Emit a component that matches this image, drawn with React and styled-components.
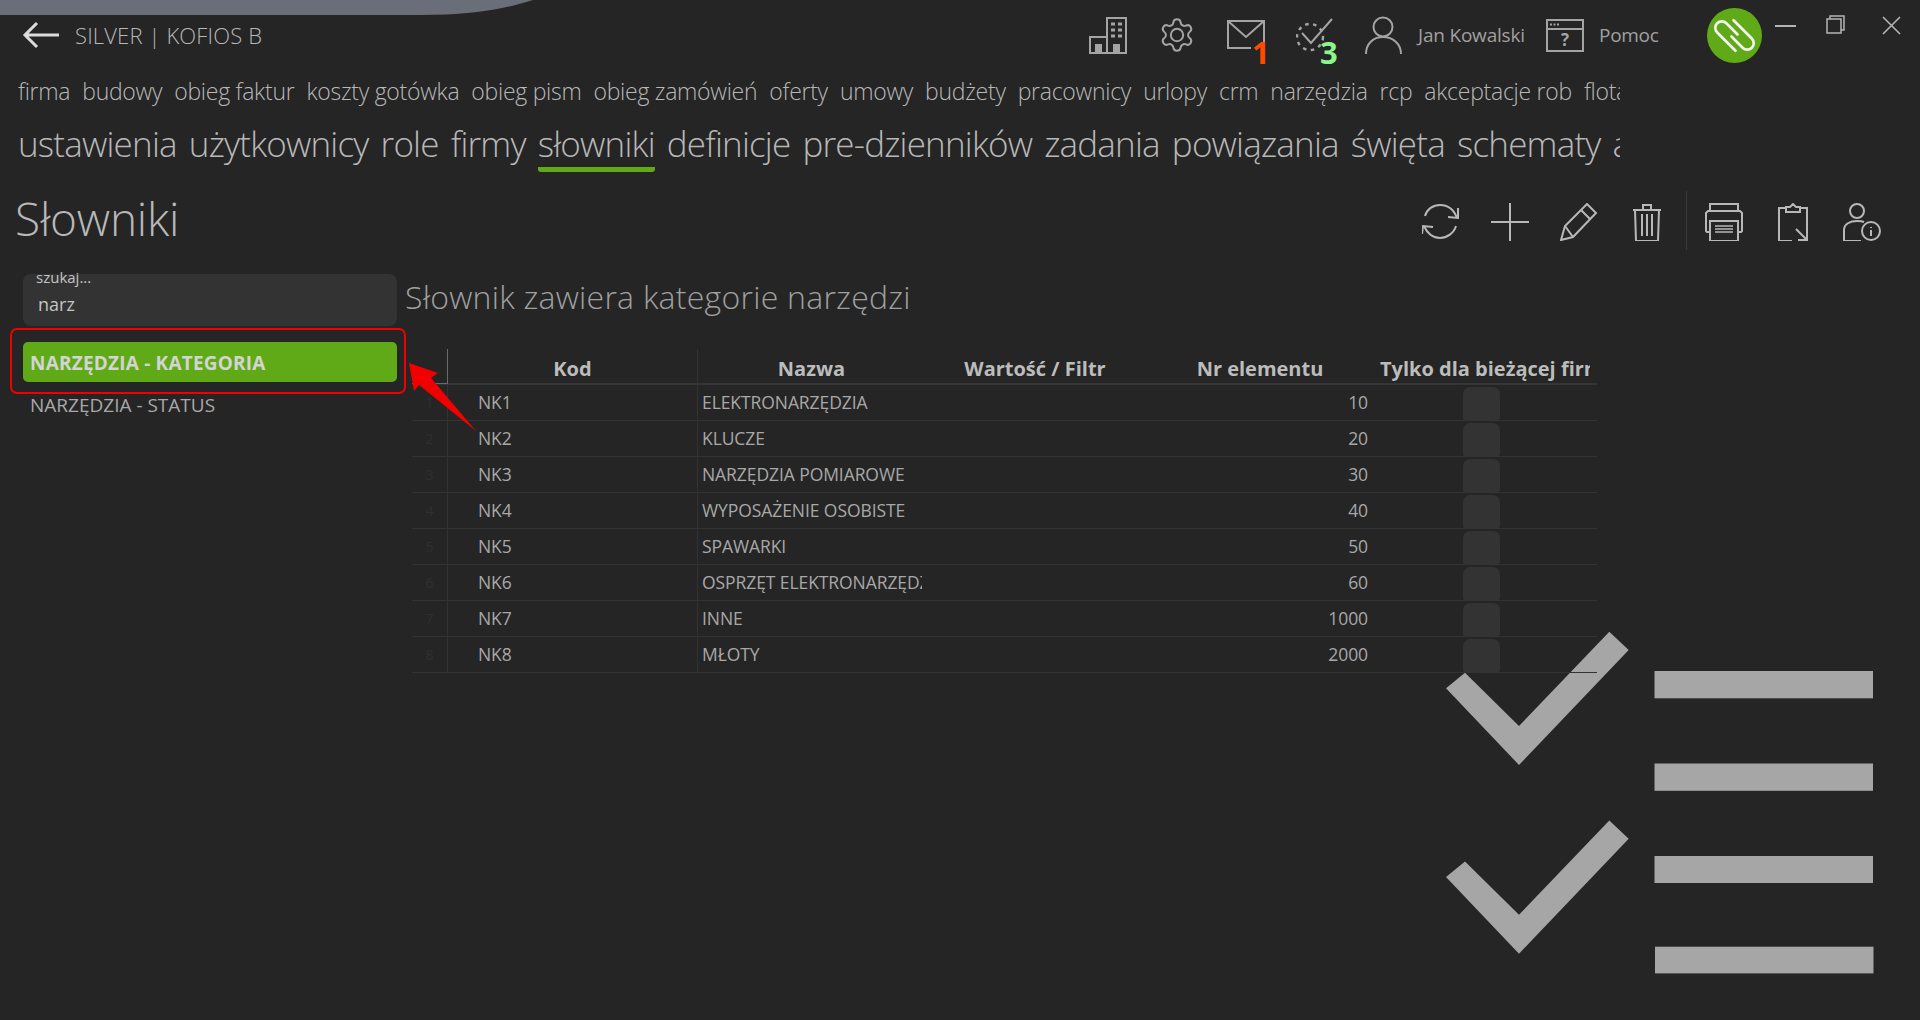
import React from 'react';
import styled, { createGlobalStyle } from 'styled-components';

const Global = createGlobalStyle`
  html, body { margin: 0; padding: 0; background: #252525; }
  * { box-sizing: border-box; }
`;
const Page = styled.div`
  position: relative; width: 1920px; height: 1020px; overflow: hidden;
  background: #252525; color: #a8a8a8;
  font-family: "Open Sans", "Noto Sans", sans-serif;
`;
const Swoosh = styled.svg`position: absolute; left: 0; top: 0;`;
const Header = styled.header`display: flex; align-items: center; height: 70px; padding-left: 22px; position: relative;`;
const Back = styled.svg`flex: none; margin-right: 15px;`;
const AppName = styled.div`font-size: 22px; font-weight: 300; color: #b8b8b8; letter-spacing: 0.15px; white-space: nowrap;`;
const TopIcons = styled.div`display: flex; align-items: center; margin-left: auto; padding-right: 19px;`;
const IconBox = styled.div`
  position: relative; flex: none; width: 38px; height: 38px; margin-right: ${p => p.$gap ?? 31}px;
  display: flex; align-items: center; justify-content: center; color: #a4a4a4;
`;
const Badge = styled.span`
  position: absolute; font-weight: 700; font-size: 31px; line-height: 30px;
  left: ${p => p.$left}px; top: 21px; color: ${p => p.$color};
`;
const UserName = styled.span`font-size: 19px; font-weight: 400; color: #a0a0a0; letter-spacing: -0.2px; white-space: nowrap; width: 107px; margin-right: 21px;`;
const Help = styled.span`font-size: 19px; font-weight: 400; color: #a0a0a0; letter-spacing: -0.3px; width: 58px; margin: 0 50px 0 15px; white-space: nowrap;`;
const Logo = styled.svg`flex: none; margin-right: 13px;`;
const WinButton = styled.svg`flex: none; margin-right: ${p => p.$gap}px; margin-bottom: ${p => p.$up}px;`;

const NavSmall = styled.nav`
  display: flex; gap: 12px; width: 1620px; overflow: hidden; padding-left: 18px; height: 30px; margin-top: 6px;
  align-items: center; white-space: nowrap;
`;
const NavSmallItem = styled.span`font-size: 23px; font-weight: 300; color: #b8b8b8; letter-spacing: -0.27px; flex: none;`;
const NavBig = styled.nav`
  display: flex; gap: 12px; width: 1620px; overflow: hidden; padding-left: 18px; height: 52px; margin-top: 14px;
  white-space: nowrap;
`;
const NavBigItem = styled.span`
  font-size: 35px; line-height: 48px; font-weight: 300; color: #b8b8b8; letter-spacing: -0.8px; flex: none; height: 52px;
  border-bottom: 5px solid ${p => p.$active ? '#60aa17' : 'transparent'};
  ${p => p.$active ? 'border-radius: 0 0 3px 3px;' : ''}
`;
const TitleRow = styled.div`display: flex; align-items: center; justify-content: space-between; height: 60px; margin-top: 18px; padding: 0 39px 0 15px;`;
const Title = styled.h1`margin: -4px 0 0; font-size: 46px; font-weight: 300; color: #b8b8b8; letter-spacing: -0.2px; line-height: 56px;`;
const Toolbar = styled.div`display: flex; align-items: center; gap: 31px;`;
const ToolIcon = styled.svg`flex: none; color: #b8b8b8; display: block; margin-top: 4px;`;
const Divider = styled.div`width: 1px; height: 59px; background: #3a3a3a; margin: 0 -12.5px;`;

const Main = styled.main`display: flex; margin-top: 24px; padding-left: 23px;`;
const Sidebar = styled.aside`width: 374px; flex: none; display: flex; flex-direction: column;`;
const Search = styled.div`position: relative; height: 52px; background: #333; border-radius: 8px; margin-bottom: 16px; padding: 19px 0 0 15px; font-size: 18px; line-height: 22px; color: #c4c4c4;`;
const SearchLabel = styled.span`position: absolute; left: 13px; top: -6px; font-size: 15px; line-height: 18px; color: #c4c4c4;`;
const ListItem = styled.div`
  height: 40px; margin-bottom: 2px; border-radius: 5px; padding: 1px 0 0 7px; display: flex; align-items: center; font-size: 19px;
  letter-spacing: ${p => p.$active ? '0.2px' : '0'};
  background: ${p => p.$active ? '#60aa17' : 'transparent'};
  color: ${p => p.$active ? '#d4d4d4' : '#a8a8a8'};
  font-weight: ${p => p.$active ? 700 : 400};
`;
const Content = styled.section`flex: 1; margin-left: 8px; position: relative; z-index: 1;`;
const Lead = styled.h2`margin: 0; font-size: 32px; font-weight: 300; line-height: 46px; color: #a0a0a0; letter-spacing: 0.25px;`;
const Table = styled.div`width: 1185px; margin: 29px 0 0 7px;`;
const Cols = `36px 249px 228px 220px 230px 222px`;
const HeadRow = styled.div`display: grid; grid-template-columns: ${Cols}; height: 36px; border-bottom: 2px solid #353535;`;
const HeadCell = styled.div`
  font-size: 20px; font-weight: 700; color: #bcbcbc; line-height: 40px; text-align: center; white-space: nowrap; overflow: hidden;
  ${p => p.$sep ? 'border-left: 1px solid #323232;' : ''}
  ${p => p.$corner ? 'border-right: 1px solid #6a6a6a; border-bottom: 1px solid #6a6a6a; margin-bottom: -1px; height: 35px;' : ''}
  ${p => p.$clip ? 'text-align: left; padding-left: 5px; margin-right: 7px;' : ''}
`;
const Row = styled.div`display: grid; grid-template-columns: ${Cols}; height: 36px; border-bottom: 1px solid #333;`;
const Cell = styled.div`
  font-size: 17.5px; color: #a8a8a8; line-height: 35px; white-space: nowrap; overflow: hidden; letter-spacing: -0.08px;
  padding: ${p => p.$pad || '0'};
  text-align: ${p => p.$right ? 'right' : 'left'};
  ${p => p.$sep ? 'border-left: 1px solid #323232; margin-right: 3px;' : ''}
`;
const RowNum = styled.div`font-size: 14px; color: #2f2f2f; line-height: 35px; text-align: center; border-right: 1px solid #323232;`;
const CheckCell = styled.div`padding: 2px 9px 0 0; display: flex; justify-content: center;`;
const Check = styled.div`width: 37px; height: 33px; background: #333; border-radius: 7px 7px 2px 2px;`;

const Watermark = styled.svg`position: absolute; left: 0; top: 0; z-index: 0; pointer-events: none;`;
const Annot = styled.svg`position: absolute; left: 0; top: 0; z-index: 3; pointer-events: none;`;

const S = { fill: 'none', stroke: 'currentColor', strokeWidth: 2 };

const Building = () => (
  <svg width="38" height="38" viewBox="0 0 38 38" {...S}>
    <path d="M18 37V2h19v35H1V21h17" />
    <path d="M22 8h4M29 8h4M22 14h4M29 14h4M22 20h4M29 20h4" strokeWidth="3" />
    <path d="M7 37v-8h5v8M25 37v-8h5v8" strokeWidth="2" fill="currentColor" />
  </svg>
);
const Gear = () => (
  <svg width="40" height="40" viewBox="0 0 24 24" fill="none" stroke="currentColor" strokeWidth="1.25">
    <path d="M9.671 4.136a2.34 2.34 0 0 1 4.659 0 2.34 2.34 0 0 0 3.319 1.915 2.34 2.34 0 0 1 2.33 4.033 2.34 2.34 0 0 0 0 3.831 2.34 2.34 0 0 1-2.33 4.033 2.34 2.34 0 0 0-3.319 1.915 2.34 2.34 0 0 1-4.659 0 2.34 2.34 0 0 0-3.32-1.915 2.34 2.34 0 0 1-2.33-4.033 2.34 2.34 0 0 0 0-3.831A2.34 2.34 0 0 1 6.35 6.051a2.34 2.34 0 0 0 3.319-1.915" />
    <circle cx="12" cy="12" r="3.9" />
  </svg>
);
const Mail = () => (
  <svg width="38" height="38" viewBox="0 0 38 38" {...S}>
    <path d="M37 26V5H1v27h23" /><path d="M1 5l18 16L37 5" />
  </svg>
);
const Tasks = () => (
  <svg width="38" height="38" viewBox="0 0 38 38" {...S}>
    <circle cx="14" cy="21" r="13" strokeDasharray="3.5 4.5" strokeWidth="2.4" />
    <path d="M6 17l9 10L36 3" />
  </svg>
);
const User = () => (
  <svg width="38" height="38" viewBox="0 0 38 38" {...S}>
    <circle cx="18" cy="11" r="9.5" /><path d="M1 38c0-10 7-17 17-17s18 7 18 17" />
  </svg>
);
const HelpIcon = () => (
  <svg width="38" height="38" viewBox="0 0 38 38" {...S}>
    <rect x="1" y="4" width="36" height="31" /><path d="M1 13h36" />
    <path d="M4 8.500h9" strokeDasharray="2 1.500" />
    <text x="19" y="30" textAnchor="middle" fontSize="17" fontWeight="700" fill="currentColor" stroke="none" fontFamily="Open Sans">?</text>
  </svg>
);

const refresh = <g {...S}><path d="M3 13C5 6 11 2 18 2c8 0 14 5 17 13" /><path d="M36 5v10l-10-1" /><path d="M34 23c-2 7-9 12-16 12-7 0-13-5-16-12" /><path d="M0 31l1-8 10 1" /></g>;
const plus = <g {...S}><path d="M19 0v38M0 19h38" /></g>;
const pencil = <g {...S}><path d="M1 37l4-14L27 1l9 9-23 24z" /><path d="M21 7l9 9M5 23l8 11" /></g>;
const trash = <g {...S}><path d="M4 7h28M14 7V2h8v5M6 7l1 31h22l1-31M13 11v22M18 11v22M23 11v22" /></g>;
const printer = <g {...S}><path d="M5 8V1h28v7" /><path d="M5 29H2l-1-1V10l2-2h32l2 2v18l-1 1h-3" /><rect x="5" y="18" width="28" height="20" /><path d="M10 23h18M10 26h18M10 29h18" strokeWidth="1.300" /></g>;
const clip = <g {...S}><path d="M12 5H5v33h13M26 5h7v24M26 38h7" /><path d="M12 4h4l3-3 3 3h4v5H12z" /><path d="M22 26l11 11M33 29v8h-9" /></g>;
const userInfo = <g {...S}><circle cx="14" cy="8" r="7" /><path d="M18 38H1V27c0-6 6-9 13-9 3 0 5 0 7 1" /><circle cx="28" cy="28" r="9" /><path d="M28 24v1M28 27v6" /></g>;

const small = ['firma','budowy','obieg faktur','koszty gotówka','obieg pism','obieg zamówień','oferty','umowy','budżety','pracownicy','urlopy','crm','narzędzia','rcp','akceptacje rob','flota'];
const big = ['ustawienia','użytkownicy','role','firmy','słowniki','definicje','pre-dzienników','zadania','powiązania','święta','schematy','akceptacje'];
const rows = [
  ['NK1','ELEKTRONARZĘDZIA',10],['NK2','KLUCZE',20],['NK3','NARZĘDZIA POMIAROWE',30],['NK4','WYPOSAŻENIE OSOBISTE',40],
  ['NK5','SPAWARKI',50],['NK6','OSPRZĘT ELEKTRONARZĘDZIA',60],['NK7','INNE',1000],['NK8','MŁOTY',2000],
];
const tools = [refresh, plus, pencil, trash];
const tools2 = [printer, clip, userInfo];

export default function App() {
  return (
    <Page>
      <Global />
      <Swoosh width="540" height="16" viewBox="0 0 540 16">
        <path d="M0 0H533C505 9 470 15 420 15H0Z" fill="#6a6e78" />
      </Swoosh>
      <Header>
        <Back width="38" height="28" viewBox="0 0 38 28" fill="none" stroke="#dcdcdc" strokeWidth="3">
          <path d="M37 14H3M15 2L3 14l12 12" />
        </Back>
        <AppName>SILVER | KOFIOS B</AppName>
        <TopIcons>
          <IconBox><Building /></IconBox>
          <IconBox><Gear /></IconBox>
          <IconBox><Mail /><Badge $left={25} $color="#ff4a00">1</Badge></IconBox>
          <IconBox><Tasks /><Badge $left={24} $color="#8cf58c">3</Badge></IconBox>
          <IconBox $gap={15}><User /></IconBox>
          <UserName>Jan Kowalski</UserName>
          <IconBox $gap={0}><HelpIcon /></IconBox>
          <Help>Pomoc</Help>
          <Logo width="55" height="55" viewBox="0 0 54 54" fill="none">
            <circle cx="27" cy="27" r="27" fill="#60aa17" />
            <g stroke="#f2f2f2" strokeWidth="2.600" strokeLinecap="round">
              <path d="M28 42L10 24A6.360 6.360 0 0 1 19 15L30 26" />
              <path d="M26 12L44 30A6.360 6.360 0 0 1 35 39L24 28" />
            </g>
          </Logo>
          <WinButton $gap={30} $up={18} width="21" height="4" viewBox="0 0 21 4" stroke="#b4b4b4" strokeWidth="2"><path d="M0 2h21" /></WinButton>
          <WinButton $gap={37} $up={22} width="19" height="19" viewBox="0 0 19 19" fill="none" stroke="#b4b4b4" strokeWidth="1.500"><rect x="1" y="4" width="14" height="14" /><path d="M4 4V1h14v14h-3" /></WinButton>
          <WinButton $gap={0} $up={20} width="19" height="19" viewBox="0 0 19 19" fill="none" stroke="#b4b4b4" strokeWidth="1.600"><path d="M1 1l17 17M18 1L1 18" /></WinButton>
        </TopIcons>
      </Header>
      <NavSmall>{small.map(t => <NavSmallItem key={t}>{t}</NavSmallItem>)}</NavSmall>
      <NavBig>{big.map(t => <NavBigItem key={t} $active={t === 'słowniki'}>{t}</NavBigItem>)}</NavBig>
      <TitleRow>
        <Title>Słowniki</Title>
        <Toolbar>
          {tools.map((t, i) => <ToolIcon key={i} width="38" height="38" viewBox="0 0 38 38">{t}</ToolIcon>)}
          <Divider />
          {tools2.map((t, i) => <ToolIcon key={i} width="38" height="38" viewBox="0 0 38 38">{t}</ToolIcon>)}
        </Toolbar>
      </TitleRow>
      <Main>
        <Sidebar>
          <Search><SearchLabel>szukaj...</SearchLabel>narz</Search>
          <ListItem $active>NARZĘDZIA - KATEGORIA</ListItem>
          <ListItem>NARZĘDZIA - STATUS</ListItem>
        </Sidebar>
        <Content>
          <Lead>Słownik zawiera kategorie narzędzi</Lead>
          <Table>
            <HeadRow>
              <HeadCell $corner />
              <HeadCell>Kod</HeadCell>
              <HeadCell $sep>Nazwa</HeadCell>
              <HeadCell>Wartość / Filtr</HeadCell>
              <HeadCell>Nr elementu</HeadCell>
              <HeadCell $clip>Tylko dla bieżącej firmy</HeadCell>
            </HeadRow>
            {rows.map((r, i) => (
              <Row key={r[0]}>
                <RowNum>{i + 1}</RowNum>
                <Cell $pad="0 0 0 30px">{r[0]}</Cell>
                <Cell $sep $pad="0 0 0 4px">{r[1]}</Cell>
                <Cell />
                <Cell $right $pad="0 7px 0 0">{r[2]}</Cell>
                <CheckCell><Check /></CheckCell>
              </Row>
            ))}
          </Table>
        </Content>
      </Main>
      <Watermark width="1920" height="1020" viewBox="0 0 1920 1020" fill="#a6a6a6">
        <path d="M1609.300 631.700L1628.700 650L1519 765L1446 688.300L1465 672.700L1519 726Z" />
        <path d="M1609.300 820.400L1628.700 838.700L1519 953.700L1446 877L1465 861.400L1519 914.700Z" />
        <rect x="1654.500" y="671" width="218.500" height="27.300" />
        <rect x="1654.500" y="763.500" width="218.500" height="27.300" />
        <rect x="1654.500" y="856" width="218.500" height="27" />
        <rect x="1655" y="946.700" width="218.500" height="26.700" />
      </Watermark>
      <Annot width="1920" height="1020" viewBox="0 0 1920 1020" fill="none">
        <rect x="11" y="329" width="394" height="64" rx="6" stroke="#f00000" strokeWidth="2" />
        <path d="M409 363L438 373L431 378L476 431L419 385L414 391Z" fill="#f00000" />
      </Annot>
    </Page>
  );
}
